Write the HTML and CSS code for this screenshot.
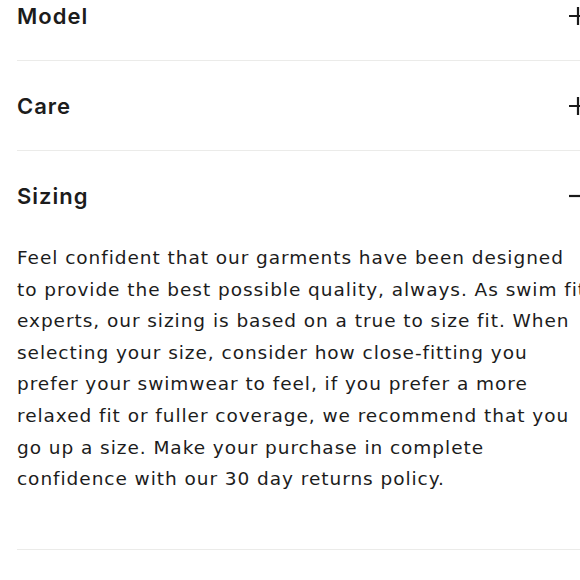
FILE: index.html
```html
<!DOCTYPE html>
<html lang="en">
<head>
<meta charset="utf-8">
<title>Product details</title>
<link rel="stylesheet" href="styles.css">
</head>
<body>
<div class="accordion">
  <div class="item">
    <div class="header">
      <span class="title">Model</span>
      <svg class="icon" viewBox="0 0 18 18" width="18" height="18"><path d="M0 9H18M9 0V18" stroke="#1a1a1a" stroke-width="2.2"/></svg>
    </div>
  </div>
  <div class="item">
    <div class="header">
      <span class="title">Care</span>
      <svg class="icon" viewBox="0 0 18 18" width="18" height="18"><path d="M0 9H18M9 0V18" stroke="#1a1a1a" stroke-width="2.2"/></svg>
    </div>
  </div>
  <div class="item open">
    <div class="header">
      <span class="title">Sizing</span>
      <svg class="icon" viewBox="0 0 18 18" width="18" height="18"><path d="M0 9H18" stroke="#1a1a1a" stroke-width="2.2"/></svg>
    </div>
    <div class="content">
      <p>Feel confident that our garments have been designed<br>
      to provide the best possible quality, always. As swim fit<br>
      experts, our sizing is based on a true to size fit. When<br>
      selecting your size, consider how close-fitting you<br>
      prefer your swimwear to feel, if you prefer a more<br>
      relaxed fit or fuller coverage, we recommend that you<br>
      go up a size. Make your purchase in complete<br>
      confidence with our 30 day returns policy.</p>
    </div>
  </div>
</div>
</body>
</html>
```
FILE: styles.css
```css
html, body {
  margin: 0;
  padding: 0;
  background: #ffffff;
  overflow: hidden;
}
body {
  color: #1c1c1c;
  font-family: "DejaVu Sans", "Liberation Sans", sans-serif;
}
.accordion {
  margin-top: -29px;
  margin-left: 17px;
  width: 570px;
}
.item {
  border-bottom: 1px solid #ebebe9;
}
.header {
  height: 89px;
  display: flex;
  align-items: center;
  justify-content: space-between;
}
.title {
  font-family: Inter, "DejaVu Sans", sans-serif;
  font-weight: 600;
  font-size: 22px;
  letter-spacing: 1px;
}
.icon {
  flex: none;
}
.content {
  padding: 2px 0 54px;
}
.content p {
  margin: 0;
  font-size: 18.5px;
  line-height: 31.6px;
  letter-spacing: 0.95px;
  white-space: nowrap;
}
```
